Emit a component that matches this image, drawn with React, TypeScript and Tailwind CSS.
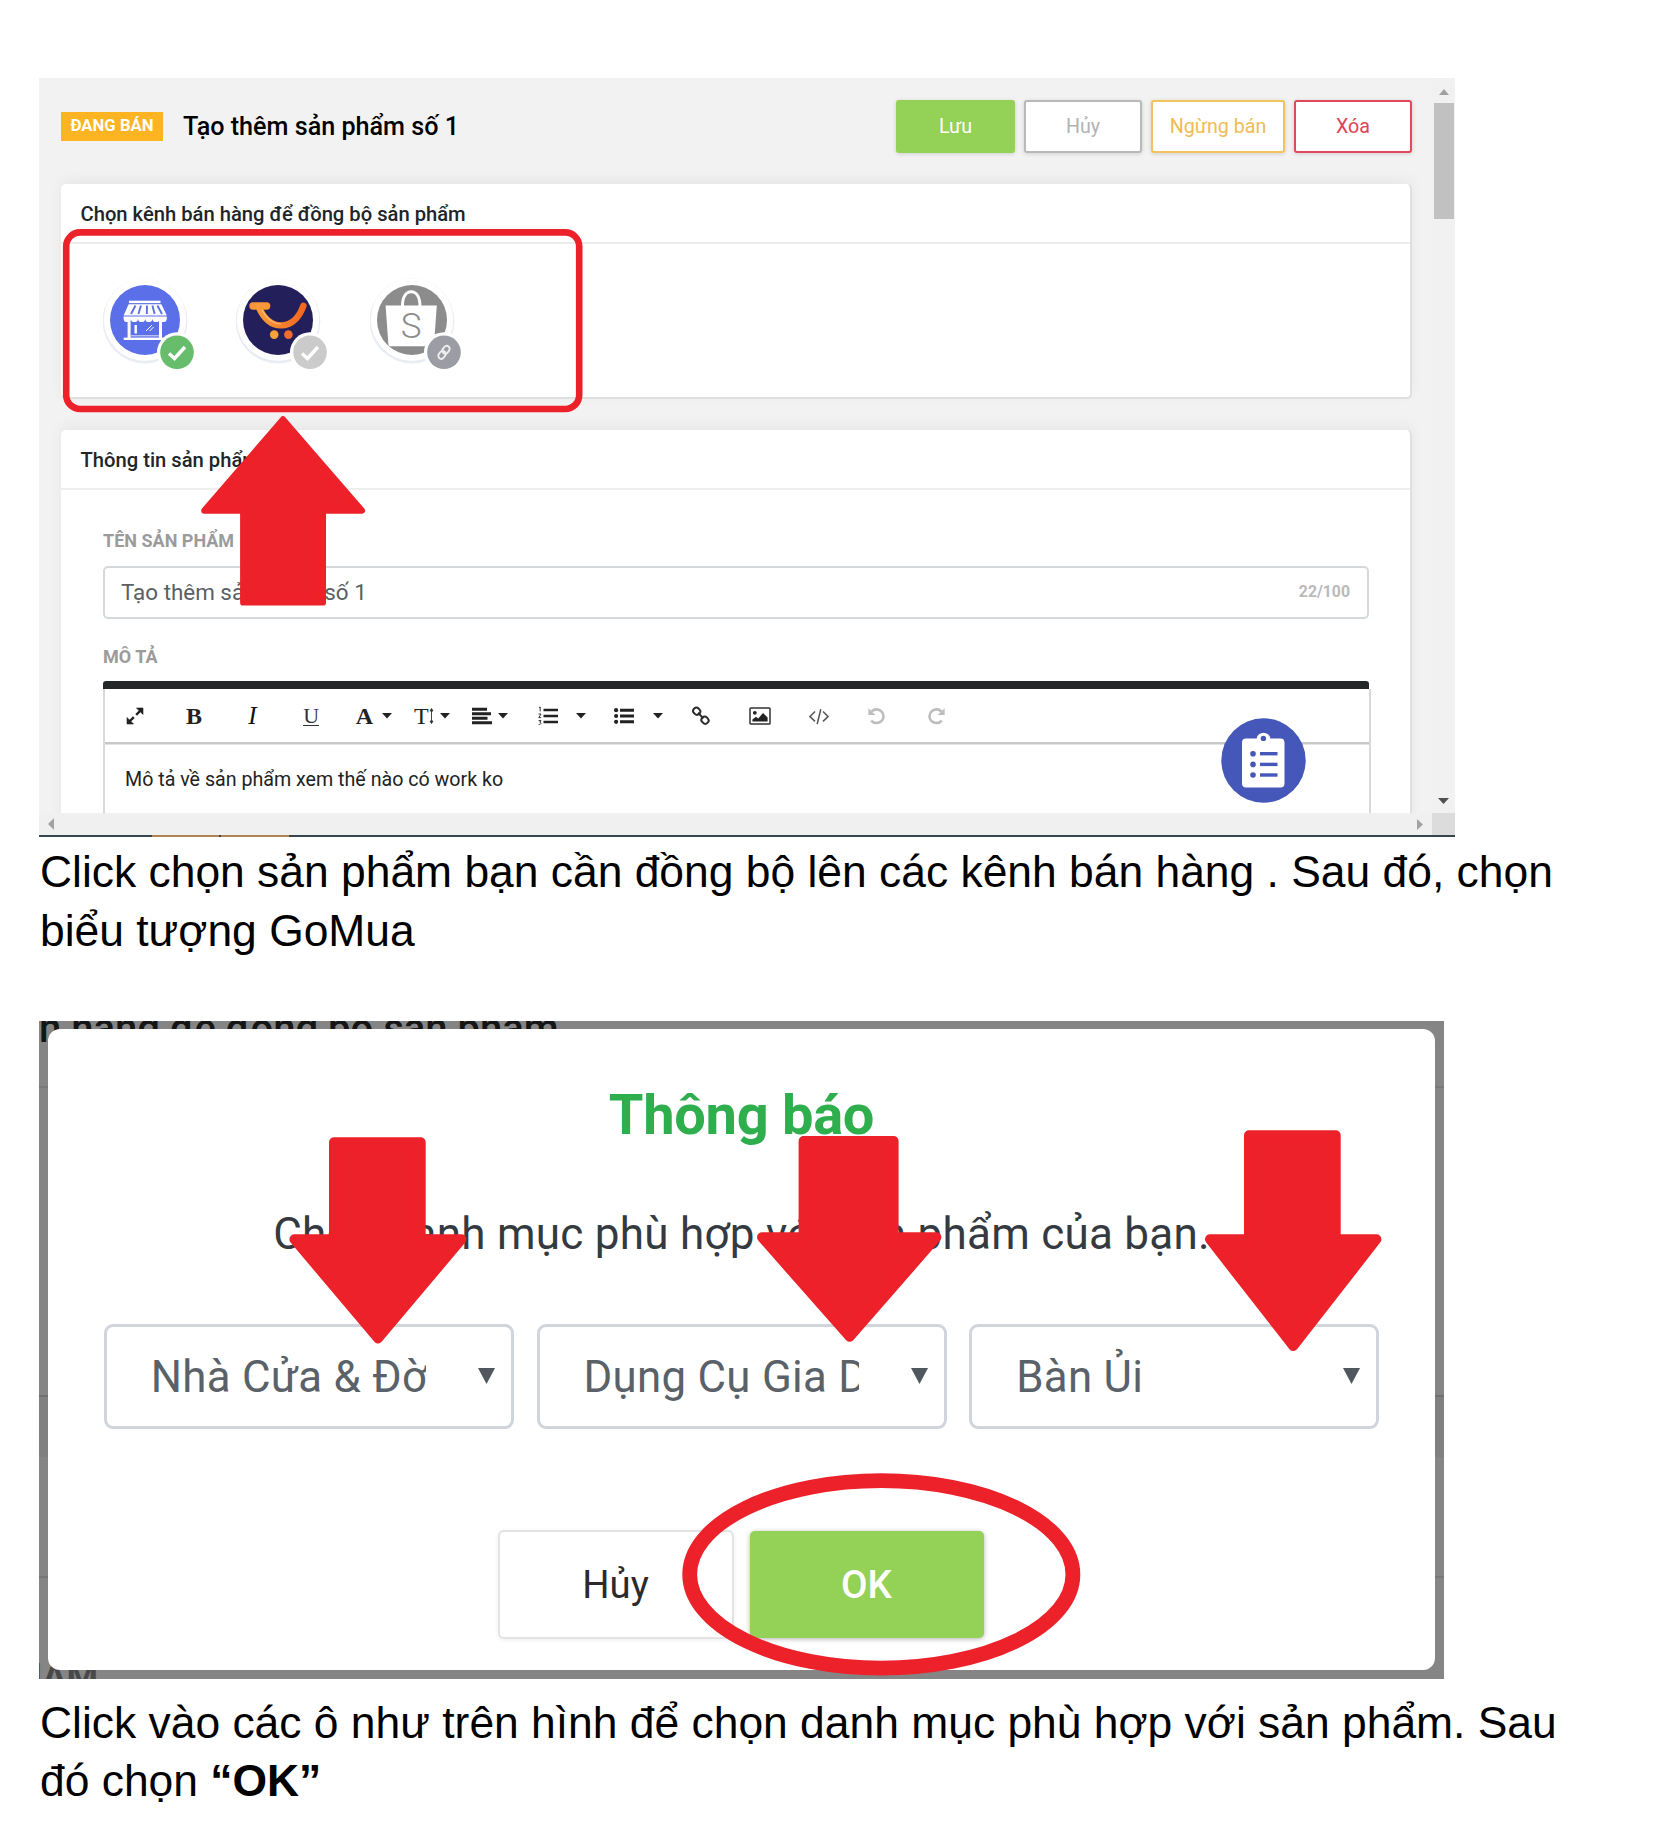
import type { ReactNode } from 'react';

const RED = '#ed2129';

function CheckMark() {
  return <path d="M66 75.5 L71.5 80.5 L82 69" fill="none" stroke="#fff" strokeWidth="3.4" />;
}

function Channel({ color, badge, children, mark }: { color: string; badge: string; children: ReactNode; mark: ReactNode }) {
  return (
    <svg width="94" height="94" viewBox="0 0 94 94" className="shrink-0">
      <circle cx="42" cy="43" r="42.4" fill="#e9ecf3" />
      <circle cx="42" cy="41.6" r="41.2" fill="#fff" />
      <circle cx="42" cy="42" r="35" fill={color} />
      {children}
      <circle cx="74" cy="74.3" r="20" fill="#fff" />
      <circle cx="74" cy="74.3" r="16.8" fill={badge} />
      {mark}
    </svg>
  );
}

function ShopChannel() {
  return (
    <Channel color="#5b70e8" badge="#67bd6b" mark={<CheckMark />}>
      <g fill="#fff">
        <rect x="26" y="22.7" width="31.5" height="2.4" />
        <path d="M25.6 26.2H58.4L63.8 37.6H20.6Z" />
        <path d="M20.6 38.4H63.8V40.4a3.6 3.6 0 0 1-7.2 0a3.6 3.6 0 0 1-7.2 0a3.6 3.6 0 0 1-7.2 0a3.6 3.6 0 0 1-7.2 0a3.6 3.6 0 0 1-7.2 0a3.6 3.6 0 0 1-7.2 0Z" />
        <rect x="24.6" y="41" width="3" height="19" />
        <rect x="56" y="41" width="3" height="19" />
        <rect x="20.7" y="59.6" width="42" height="2.4" />
        <rect x="31.5" y="47" width="2.4" height="8.5" />
      </g>
      <g stroke="#5b70e8" strokeWidth="1.9">
        <path d="M32.5 27.5L28 36M38 27.5L35.4 36M44 27.5L43.8 36M49.4 27.5L51.6 36M54.4 27.5L59 36" />
      </g>
      <path d="M43 53L49 47M46.6 53L50.6 49" stroke="#fff" strokeWidth="1" />
      <path d="M27.6 57.8H56" stroke="#fff" strokeWidth="0.8" />
    </Channel>
  );
}

function GoMuaChannel() {
  return (
    <Channel color="#221f5a" badge="#cbcbcb" mark={<CheckMark />}>
      <defs>
        <linearGradient id="smile" x1="0" x2="1">
          <stop offset="0" stopColor="#f79b3c" />
          <stop offset="1" stopColor="#f2681f" />
        </linearGradient>
      </defs>
      <path d="M10.4 28H24" stroke="#f79636" strokeWidth="7.4" strokeLinecap="round" transform="translate(6.6 0)" />
      <path d="M22.5 28.5C27 39 34 47.4 45 47.4C56.5 47.4 64 38 67.4 27.8" fill="none" stroke="url(#smile)" strokeWidth="6.4" strokeLinecap="round" />
      <path d="M26 32C30 40 37 46 45 46" fill="none" stroke="#fbbd73" strokeWidth="1.2" />
      <circle cx="38.2" cy="56.6" r="4.3" fill="#f9a13a" />
      <circle cx="52.4" cy="56.6" r="4.3" fill="#f36c2e" />
    </Channel>
  );
}

function ShopeeChannel() {
  return (
    <Channel
      color="#8c8c8c"
      badge="#9b9ca4"
      mark={
        <g fill="none" stroke="#eee" strokeWidth="1.9" transform="translate(74 74.3) rotate(-52)">
          <rect x="-7.4" y="-3" width="8.4" height="6" rx="3" />
          <rect x="-1" y="-3" width="8.4" height="6" rx="3" />
        </g>
      }
    >
      <path d="M15.6 27.4H66.8L64 66.5a2 2 0 0 1-2 1.7H20.4a2 2 0 0 1-2-1.7Z" fill="#fff" />
      <path d="M32.4 29C32.4 19 36 13.8 41.2 13.8S50 19 50 29" fill="none" stroke="#fff" strokeWidth="3" />
      <text x="41.2" y="59.8" textAnchor="middle" fontSize="35" fontWeight="300" fill="#8c8c8c" fontFamily="Roboto, sans-serif">
        S
      </text>
    </Channel>
  );
}

function Caret() {
  return (
    <svg width="10" height="6" viewBox="0 0 10 6" className="shrink-0">
      <path d="M0 0H10L5 5.6Z" fill="#222" />
    </svg>
  );
}

function ToolbarIcon({ children, w = 20 }: { children: ReactNode; w?: number }) {
  return (
    <svg width={w} height="20" viewBox={`0 0 ${w} 20`} className="shrink-0">
      {children}
    </svg>
  );
}

const serif = "font-['Liberation_Serif',serif] text-[24px] leading-6 text-[#222]";

function Toolbar() {
  return (
    <div className="flex h-[53px] items-center pl-[1px] [&>div]:flex [&>div]:shrink-0 [&>div]:items-center [&>div]:justify-center">
      <div className="w-[58.6px]">
        <ToolbarIcon>
          <g fill="#222" stroke="#222">
            <path d="M4.5 15.5L8.8 11.2M11.2 8.8L15.5 4.5" strokeWidth="2.4" />
            <path d="M11.5 2H18V8.5ZM2 11.5V18H8.5Z" strokeWidth="0.6" />
          </g>
        </ToolbarIcon>
      </div>
      <div className="w-[58.6px]">
        <span className={`${serif} font-bold`}>B</span>
      </div>
      <div className="w-[58.6px]">
        <span className="font-['Liberation_Serif',serif] text-[25px] italic leading-6 text-[#111]">I</span>
      </div>
      <div className="w-[58.6px]">
        <span className="border-b-[1.5px] border-[#333] font-['Liberation_Serif',serif] text-[22px] leading-[19px] text-[#333]">U</span>
      </div>
      <div className="w-[67px] gap-[9px]">
        <span className={`${serif} font-bold`}>A</span>
        <Caret />
      </div>
      <div className="w-[49px] gap-[6px]">
        <span className="flex items-center">
          <span className={serif}>T</span>
          <svg width="5" height="18" viewBox="0 0 5 18">
            <path d="M2.5 2V16M1 4L2.5 1.5L4 4ZM1 14L2.5 16.5L4 14Z" stroke="#333" strokeWidth="0.9" fill="#333" />
          </svg>
        </span>
        <Caret />
      </div>
      <div className="w-[68px] gap-[6px]">
        <ToolbarIcon>
          <path d="M0 3.2H15M0 7.7H19M0 12.2H15.5M0 16.7H20" stroke="#222" strokeWidth="2.9" />
        </ToolbarIcon>
        <Caret />
      </div>
      <div className="w-[75px] gap-[18px]">
        <ToolbarIcon>
          <path d="M5.5 4H20M5.5 10H20M5.5 16H20" stroke="#222" strokeWidth="2.6" />
          <path d="M1 1.6L2.2 1V5.4M0.6 8H3L0.8 11.6H3.2M0.6 14.6H3L1.8 16.2C3.6 16.4 3.4 18.8 0.6 18.4" fill="none" stroke="#333" strokeWidth="1" />
        </ToolbarIcon>
        <Caret />
      </div>
      <div className="w-[78px] gap-[19px]">
        <ToolbarIcon>
          <path d="M6 4.2H20M6 10H20M6 15.8H20" stroke="#222" strokeWidth="2.9" />
          <g fill="#222">
            <circle cx="2.1" cy="4.2" r="2.1" />
            <circle cx="2.1" cy="10" r="2.1" />
            <circle cx="2.1" cy="15.8" r="2.1" />
          </g>
        </ToolbarIcon>
        <Caret />
      </div>
      <div className="w-[47px]">
        <ToolbarIcon>
          <g fill="none" stroke="#2a2a2a" strokeWidth="2">
            <rect x="-3.6" y="-3.2" width="7.2" height="6.4" rx="3" transform="translate(5.7 5.2) rotate(45)" />
            <rect x="-3.6" y="-3.2" width="7.2" height="6.4" rx="3" transform="translate(14 14.2) rotate(45)" />
            <path d="M7 6.8L12.4 12.4" />
          </g>
        </ToolbarIcon>
      </div>
      <div className="w-[72px]">
        <ToolbarIcon w={22}>
          <rect x="1" y="2" width="20" height="16" rx="0.8" fill="none" stroke="#333" strokeWidth="1.5" />
          <circle cx="5.8" cy="6.8" r="1.9" fill="#222" />
          <path d="M3.4 15.6V13.4L7 10.8L9.2 12.4L14 7L18.6 11.4V15.6Z" fill="#222" />
        </ToolbarIcon>
      </div>
      <div className="w-[45px]">
        <ToolbarIcon>
          <path d="M6 5.4L1 10.6L6 15.4M14 5.4L19 10.6L14 15.4M11.8 3.2L8.2 18" fill="none" stroke="#555" strokeWidth="1.5" />
        </ToolbarIcon>
      </div>
      <div className="w-[72px]">
        <ToolbarIcon>
          <path d="M4.6 5.4A7 6.8 0 1 1 4.2 14.6" fill="none" stroke="#bdbdbd" strokeWidth="2.6" />
          <path d="M1.4 2.2V9H8.4Z" fill="#bdbdbd" />
        </ToolbarIcon>
      </div>
      <div className="w-[46px]">
        <ToolbarIcon>
          <path d="M15.4 5.4A7 6.8 0 1 0 15.8 14.6" fill="none" stroke="#bdbdbd" strokeWidth="2.6" />
          <path d="M18.6 2.2V9H11.6Z" fill="#bdbdbd" />
        </ToolbarIcon>
      </div>
    </div>
  );
}

function Fab() {
  return (
    <svg width="85" height="85" viewBox="0 0 85 85" className="absolute left-[1182px] top-[640px]">
      <circle cx="42.5" cy="42.5" r="42.2" fill="#4557b9" />
      <path d="M25 20.5H35.6A7 7 0 0 1 49.4 20.5H59.5A4 4 0 0 1 63.5 24.5V65.5A4 4 0 0 1 59.5 69.5H25A4 4 0 0 1 21 65.5V24.5A4 4 0 0 1 25 20.5Z" fill="#fff" />
      <g fill="#4557b9">
        <circle cx="42.4" cy="20.4" r="2.7" />
        <circle cx="32" cy="35.8" r="2.8" />
        <circle cx="32" cy="46.4" r="2.8" />
        <circle cx="32" cy="57" r="2.8" />
        <rect x="39" y="34" width="17.5" height="3.4" />
        <rect x="39" y="44.7" width="17.5" height="3.4" />
        <rect x="39" y="55.3" width="17.5" height="3.4" />
      </g>
    </svg>
  );
}

function Card({ title, className, children }: { title: string; className: string; children: ReactNode }) {
  return (
    <section
      className={`w-[1351px] rounded-[5px] border-b-2 border-r-2 border-[#dfdfdf] bg-white bg-clip-padding shadow-[0_-4px_14px_rgba(0,0,0,0.05)] ${className}`}
    >
      <h2 className="flex h-[60px] items-center border-b-2 border-[#ededee] pl-[19.5px] pt-[1px] text-[20.2px] font-medium leading-6 text-[#212529]">
        {title}
      </h2>
      {children}
    </section>
  );
}

const headButton = 'flex h-[53px] items-center justify-center rounded-[3px] text-[19.7px] shadow-[0_1px_4px_rgba(0,0,0,0.15)]';

function ProductScreen() {
  return (
    <figure className="relative ml-[39px] h-[759px] w-[1416px] overflow-hidden bg-[#f2f2f2] font-[Roboto,sans-serif]">
      <div className="flex h-[735px]">
        <div className="h-full w-[1393px] overflow-hidden pl-[22px]">
          <header className="flex h-[106px] w-[1351px] items-start pt-[22px]">
            <div className="flex h-[53px] flex-1 items-center">
              <span className="flex h-[29px] w-[102px] items-center justify-center bg-[#fdb423] text-[16.7px] font-bold leading-none text-white">ĐANG BÁN</span>
              <h1 className="ml-5 pt-[1px] text-[25.15px] font-medium leading-8 text-black">Tạo thêm sản phẩm số 1</h1>
            </div>
            <button className={`${headButton} mr-[9px] w-[119px] bg-[#94d157] text-white`}>Lưu</button>
            <button className={`${headButton} mr-[9px] w-[118px] border-2 border-[#b9b9b9] bg-white text-[#b3b3b3]`}>Hủy</button>
            <button className={`${headButton} mr-[9px] w-[134px] border-2 border-[#f2c25c] bg-white text-[#f1bb55]`}>Ngừng bán</button>
            <button className={`${headButton} w-[118px] border-2 border-[#e04a5b] bg-white text-[#dc4455]`}>Xóa</button>
          </header>

          <Card title="Chọn kênh bán hàng để đồng bộ sản phẩm" className="h-[215px]">
            <div className="flex gap-[39.4px] pl-[42px] pt-[34px]">
              <ShopChannel />
              <GoMuaChannel />
              <ShopeeChannel />
            </div>
          </Card>

          <Card title="Thông tin sản phẩm" className="mt-[31px] h-[500px]">
            <div className="pl-[42px] pt-[39px]">
              <label className="block text-[18px] font-bold leading-6 text-[#9b9b9b]">TÊN SẢN PHẨM</label>
              <div className="mt-[13px] flex h-[53px] w-[1266px] items-center justify-between rounded-[5px] border-2 border-[#d6d9db] pl-[16px] pr-[17px]">
                <span className="text-[22.4px] text-[#5a5f64]">Tạo thêm sản phẩm số 1</span>
                <span className="pb-[1px] text-[15.8px] font-bold text-[#bababa]">22/100</span>
              </div>
              <label className="mt-[26px] block text-[18px] font-bold leading-6 text-[#9b9b9b]">MÔ TẢ</label>
              <div className="mt-[12px] w-[1268px]">
                <div className="h-[8px] w-[1266px] rounded-t-[3px] bg-[#242627]" />
                <div className="h-[130px] border-x-2 border-[#d9d9d9]">
                  <Toolbar />
                  <div className="h-[3px] border-b border-[#e4e4e4] bg-[#c6c8c9]" />
                  <p className="pl-[20px] pt-[20px] text-[19.65px] leading-[30px] text-[#222]">Mô tả về sản phẩm xem thế nào có work ko</p>
                </div>
              </div>
            </div>
          </Card>
        </div>

        <div className="flex w-[23px] flex-col items-center bg-[#f1f1f1]">
          <svg width="10" height="6" viewBox="0 0 10 6" className="mt-[11px]">
            <path d="M5 0L10 6H0Z" fill="#a0a0a0" />
          </svg>
          <div className="mt-[8px] h-[116px] w-[20px] bg-[#c1c1c1]" />
          <svg width="11" height="6" viewBox="0 0 11 6" className="mb-[9px] mt-auto">
            <path d="M0 0H11L5.5 6Z" fill="#505050" />
          </svg>
        </div>
      </div>

      <div className="flex h-[22px] items-center justify-between bg-[#f0f0f0]">
        <svg width="6" height="12" viewBox="0 0 6 12" className="ml-[9px]">
          <path d="M6 0V12L0 6Z" fill="#a3a3a3" />
        </svg>
        <div className="flex h-full items-center">
          <svg width="6" height="11" viewBox="0 0 6 11" className="mr-[9px]">
            <path d="M0 0V11L6 5.5Z" fill="#a3a3a3" />
          </svg>
          <div className="h-full w-[23px] bg-[#dcdcdc]" />
        </div>
      </div>
      <div className="flex h-[2px] gap-[2px] bg-[#35474d] pl-[113px]">
        <div className="w-[67px] bg-[#b08455]" />
        <div className="w-[68px] bg-[#b08455]" />
      </div>

      <Fab />

      <svg className="absolute inset-0" width="1416" height="759" viewBox="39 78 1416 759">
        <rect x="66.2" y="232.4" width="513" height="176.6" rx="14" fill="none" stroke={RED} strokeWidth="6.6" />
        <path
          d="M283 419.5L361.8 510.6H322.8V602.4H243.3V510.6H204.4Z"
          fill={RED}
          stroke={RED}
          strokeWidth="6.4"
          strokeLinejoin="round"
        />
      </svg>
    </figure>
  );
}

function Select({ value }: { value: string }) {
  return (
    <div className="flex h-[105px] w-[410px] items-center rounded-[9px] border-[3px] border-[#cfd5db] pl-[44px]">
      <span className="w-[275px] overflow-hidden whitespace-nowrap pt-[1px] text-[43.8px] leading-[64px] tracking-[0.3px] text-[#5a6168]">{value}</span>
      <svg width="17" height="16" viewBox="0 0 17 16" className="ml-[52px] shrink-0">
        <path d="M0 0H17L8.5 16Z" fill="#50575e" />
      </svg>
    </div>
  );
}

function DialogScreen() {
  return (
    <figure className="relative ml-[39px] mt-[60.6px] h-[658.4px] w-[1405px] overflow-hidden bg-[#858585] pl-[9px] pt-[8px] font-[Roboto,sans-serif]">
      <div className="absolute inset-0 text-[#151515]">
        <span className="absolute left-0 top-[-12px] whitespace-nowrap text-[40px] font-medium leading-10">n hàng để đồng bộ sản phẩm</span>
        <span className="absolute bottom-[-18px] right-[1346px] whitespace-nowrap text-[36px] font-bold leading-10 text-[#484848]">HẨM</span>
        <div className="absolute top-[65px] h-[2px] w-full bg-[#7a7a7a]" />
        <div className="absolute top-[374px] h-[62px] w-full border-t-2 border-[#707070] bg-[#808080]" />
        <div className="absolute top-[555px] h-[2px] w-full bg-[#787878]" />
      </div>
      <div className="relative h-[641px] w-[1387px] rounded-[12px] bg-white pt-[54px] text-center">
        <h2 className="text-[56px] font-bold leading-[64px] tracking-[-0.3px] text-[#2fae4e]">Thông báo</h2>
        <p className="mt-[59px] text-[44px] leading-[56px] tracking-[0.25px] text-[#343a3f]">Chọn danh mục phù hợp với sản phẩm của bạn.</p>
        <div className="mt-[61.5px] flex justify-center gap-[22.7px] text-left">
          <Select value="Nhà Cửa & Đờ" />
          <Select value="Dụng Cụ Gia Dụng" />
          <Select value="Bàn Ủi" />
        </div>
        <div className="mt-[101px] flex justify-center gap-[16px] pr-[2px]">
          <button className="h-[109px] w-[236px] rounded-[6px] border-2 border-[#e3e3e3] bg-white pt-[2px] text-[38.3px] text-[#2b2b2b] shadow-[0_1px_4px_rgba(0,0,0,0.08)]">
            Hủy
          </button>
          <button className="h-[107px] w-[234px] self-center rounded-[5px] bg-[#94d157] pt-[2px] text-[38.5px] font-medium text-white shadow-[0_1px_5px_rgba(0,0,0,0.3)]">
            OK
          </button>
        </div>
      </div>

      <svg className="absolute inset-0" width="1405" height="658.4" viewBox="39 1021 1405 658.4">
        <g fill={RED} stroke={RED} strokeWidth="10" strokeLinejoin="round">
          <path d="M334 1142.3H420.7V1239.3H461.4L378 1338.4L294.4 1239.3H334Z" />
          <path d="M803.6 1141H893.6V1237.3H936.4L849.7 1336.8L762 1237.3H803.6Z" />
          <path d="M1249 1135.3H1335.7V1239.3H1376.4L1293.3 1346L1210 1239.3H1249Z" />
        </g>
        <ellipse cx="881.3" cy="1574.4" rx="191.6" ry="93.8" fill="none" stroke={RED} strokeWidth="14.8" />
      </svg>
    </figure>
  );
}

const caption = "ml-[40px] whitespace-nowrap font-['Liberation_Sans',sans-serif] text-[44.4px] leading-[58.7px] text-black";

export default function App() {
  return (
    <main className="h-[1841px] w-[1653px] overflow-hidden bg-white pt-[78px]">
      <ProductScreen />
      <p className={`${caption} mt-[6px]`}>
        Click chọn sản phẩm bạn cần đồng bộ lên các kênh bán hàng . Sau đó, chọn
        <br />
        biểu tượng GoMua
      </p>
      <DialogScreen />
      <p className={`${caption} mt-[14.4px]`}>
        Click vào các ô như trên hình để chọn danh mục phù hợp với sản phẩm. Sau
        <br />
        đó chọn <b>“OK”</b>
      </p>
    </main>
  );
}
